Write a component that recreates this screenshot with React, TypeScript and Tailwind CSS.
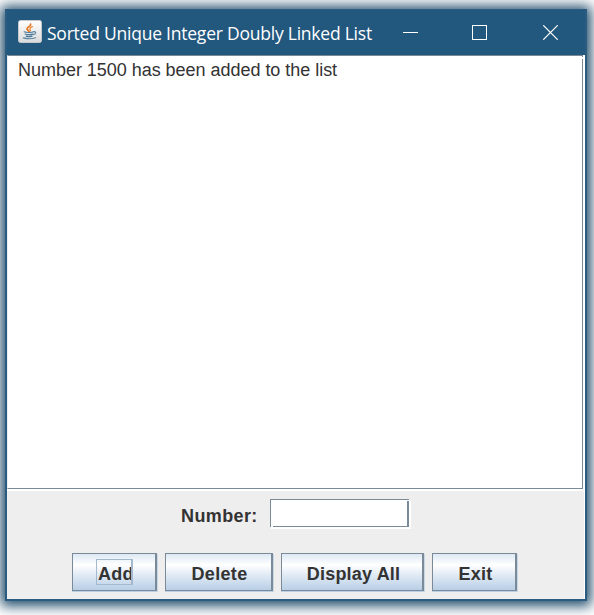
import type { ReactNode } from "react";

function JavaIcon() {
  return (
    <svg width="24" height="23" viewBox="0 0 24 23" className="block shrink-0">
      <defs>
        <linearGradient id="tile" x1="0" y1="0" x2="0" y2="1">
          <stop offset="0" stopColor="#ffffff" />
          <stop offset="1" stopColor="#dadada" />
        </linearGradient>
      </defs>
      <rect x="0.5" y="0.5" width="23" height="22" rx="2" fill="url(#tile)" stroke="#c5c9cc" />
      <g fill="none" strokeLinecap="round">
        <path d="M12.600 4.200c.8 2.200-4 2.900-3.600 4.900.2.900 1.500 1.300 1.900 2.200" stroke="#e77825" strokeWidth="1.800" />
        <path d="M14.400 6.700c-1.700.7-3.100 1.400-2.200 2.800.4.700.3 1.200-.4 1.800" stroke="#eb8a3c" strokeWidth="1.300" />
        <path d="M6.200 11.800c1.500.9 7.500.9 9.300 0M7.200 14c1.500.8 6 .8 7.600.1M8.300 16.100c1.800.6 4.200.6 5.700 0" stroke="#4d7a9c" strokeWidth="1.200" />
        <path d="M15.800 11.800c3-.6 2.200 2.300-.7 2.900M5.400 17.900c3 .8 9 .9 12.200-.1" stroke="#5e88a5" strokeWidth="1.200" />
      </g>
    </svg>
  );
}

function TitleBar() {
  return (
    <header className="flex h-[45px] shrink-0 items-start bg-[#22577e] pl-[11px] pt-[10px]">
      <JavaIcon />
      <h1 className="ml-[5px] w-[356px] whitespace-nowrap font-['Open_Sans','Noto_Sans',sans-serif] text-[17.5px] leading-[26px] tracking-[-0.23px] text-white">
        Sorted Unique Integer Doubly Linked List
      </h1>
      <svg width="155" height="15" viewBox="0 0 155 15" fill="none" stroke="#fff" className="mt-[5px] block shrink-0">
        <path d="M0 7.500h15" />
        <rect x="69.500" y="0.500" width="14" height="14" />
        <path d="M140.300.3l14.400 14.400M154.700.3l-14.400 14.400" strokeWidth="1.200" />
      </svg>
    </header>
  );
}

function MetalButton({ className, children }: { className: string; children: ReactNode }) {
  return (
    <button
      className={
        "flex h-[38px] shrink-0 items-center justify-center border border-r-2 border-[#7a8a99] bg-[linear-gradient(to_bottom,#dce8f3_0%,#ffffff_30%,#dfe9f4_60%,#b8cfe5_100%)] pt-[3px] text-[18px] leading-[22px] font-bold shadow-[0_1px_0_#b8cfe5,1px_1px_0_#c8d7e6] " +
        className
      }
    >
      {children}
    </button>
  );
}

export default function App() {
  return (
    <div className="flex h-[615px] w-[594px] overflow-hidden bg-white pl-[5px] pt-[9px] font-['Liberation_Sans',Arial,sans-serif] text-[#333]">
      <main className="flex h-[592px] w-[582px] shrink-0 flex-col border-2 border-t-[1px] border-[#2a5c82] shadow-[0_1px_12px_4px_#204c6b]">
        <TitleBar />
        <div className="flex min-h-0 flex-1 flex-col bg-white">
          <div className="relative h-[434px] w-[576px] shrink-0 border border-[#7a8a99] border-l-[#e9edf0] pl-[10px] pt-[4px] text-[18px] leading-[21px] tracking-[-0.03px] whitespace-nowrap">
            Number 1500 has been added to the list
            <span className="absolute top-[1px] -right-px h-[2px] w-px bg-white" />
          </div>
          <div className="mt-[2px] mr-px flex-1 bg-[#eee]">
            <div className="flex h-[30px] pl-[174px] pt-[8px]">
              <label className="w-[89px] shrink-0 pt-[6px] text-[18px] leading-[22px] font-bold tracking-[0.38px]">Number:</label>
              <div className="relative h-[28px] w-[139px] shrink-0">
                <input
                  readOnly
                  aria-label="Number"
                  className="block h-full w-full border border-r-2 border-[#7a8a99] bg-white shadow-[1px_2px_0_#fff,2px_2px_0_#fff] outline-none"
                />
                <span className="absolute bottom-0 left-px h-px w-[2px] bg-white" />
                <span className="absolute top-px right-0 h-px w-[2px] bg-white" />
              </div>
            </div>
            <div className="mt-[32px] flex gap-2 pl-[65px]">
              <MetalButton className="w-[85px]">
                <span className="-mt-[3px] flex h-[26px] w-[37px] overflow-hidden border border-r-2 border-[#a3b8cc] pl-[1.5px] pt-[3px] tracking-[0.3px]">Add</span>
              </MetalButton>
              <MetalButton className="w-[108px] pl-[2px] tracking-[0.35px]">Delete</MetalButton>
              <MetalButton className="w-[143px] pl-[3px] tracking-[0.18px]">Display All</MetalButton>
              <MetalButton className="w-[85px] pl-[3px] tracking-[0.3px]">Exit</MetalButton>
            </div>
          </div>
        </div>
      </main>
    </div>
  );
}
